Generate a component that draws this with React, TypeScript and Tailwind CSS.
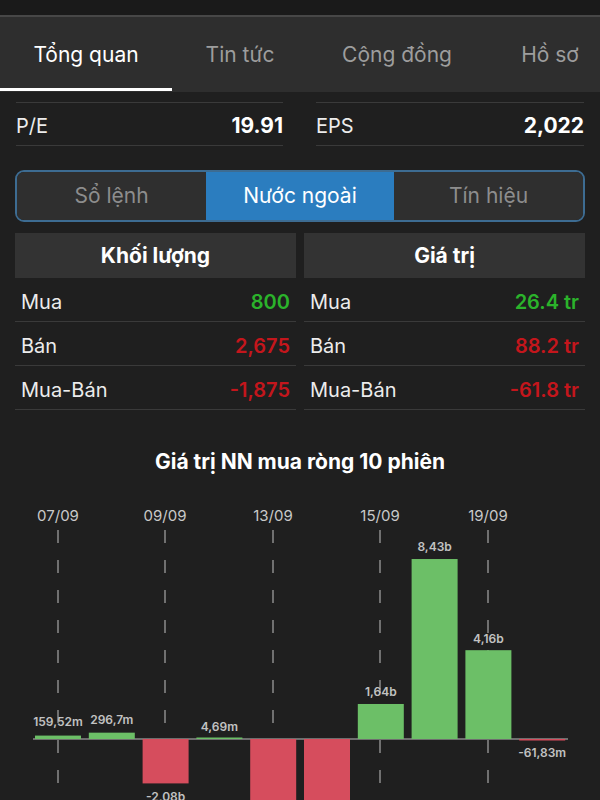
import React from "react";

const tabs = [
  { label: "Tổng quan", w: "w-[172px]", active: true },
  { label: "Tin tức", w: "w-[136px]", active: false },
  { label: "Cộng đồng", w: "w-[178px]", active: false },
  { label: "Hồ sơ", w: "w-[128px]", active: false },
];

const segments = [
  { label: "Sổ lệnh", w: "w-[189px]", active: false },
  { label: "Nước ngoài", w: "w-[188px]", active: true },
  { label: "Tín hiệu", w: "flex-1", active: false },
];

type Row = { label: string; value: string; up: boolean };

const volumeRows: Row[] = [
  { label: "Mua", value: "800", up: true },
  { label: "Bán", value: "2,675", up: false },
  { label: "Mua-Bán", value: "-1,875", up: false },
];

const valueRows: Row[] = [
  { label: "Mua", value: "26.4 tr", up: true },
  { label: "Bán", value: "88.2 tr", up: false },
  { label: "Mua-Bán", value: "-61.8 tr", up: false },
];

// values in billions, net foreign buy for 10 sessions
const bars = [
  { v: 0.16, label: "159,52m", ly: 722 },
  { v: 0.2967, label: "296,7m", ly: 720 },
  { v: -2.08, label: "-2,08b", ly: 797 },
  { v: 0.0047, label: "4,69m", ly: 727 },
  { v: -3.6, label: "", ly: 0 },
  { v: -3.9, label: "", ly: 0 },
  { v: 1.64, label: "1,64b", ly: 692 },
  { v: 8.43, label: "8,43b", ly: 547 },
  { v: 4.16, label: "4,16b", ly: 639 },
  { v: -0.0618, label: "-61,83m", ly: 753 },
];

const dates = [
  { x: 58, d: "07/09" },
  { x: 165, d: "09/09" },
  { x: 273, d: "13/09" },
  { x: 380, d: "15/09" },
  { x: 488, d: "19/09" },
];

const TOP = 474; // svg top in page coords
const BASE = 739 - TOP;
const SCALE = 21.35;

const StatTable = ({ title, rows }: { title: string; rows: Row[] }) => (
  <div className="flex flex-col">
    <div className="h-[45px] bg-[#333333] flex items-center justify-center text-[21px] font-bold text-white">
      {title}
    </div>
    {rows.map((r) => (
      <div
        key={r.label}
        className="h-[44px] border-b border-[#3a3a3a] flex items-center justify-between px-[6px] pt-[5px]"
      >
        <span className="text-[20px] text-[#ececec]">{r.label}</span>
        <span
          className={
            r.up
              ? "text-[20px] font-semibold text-[#2bb32b]"
              : "text-[20px] font-semibold text-[#c4161c]"
          }
        >
          {r.value}
        </span>
      </div>
    ))}
  </div>
);

const Chart = () => (
  <svg width="600" height={800 - TOP} className="block">
    {dates.map((d) => (
      <g key={d.d}>
        <text
          x={d.x}
          y={47}
          textAnchor="middle"
          fontSize="15"
          fill="#c9c9c9"
          fontFamily="Inter, sans-serif"
        >
          {d.d}
        </text>
        <line
          x1={d.x}
          x2={d.x}
          y1={56}
          y2={330}
          stroke="#707070"
          strokeWidth="2"
          strokeDasharray="13 17"
        />
      </g>
    ))}
    <line x1="33" x2="568" y1={BASE} y2={BASE} stroke="#8a8a8a" strokeWidth="1.5" />
    {bars.map((b, i) => {
      const x = 35 + i * 53.8;
      const h = Math.max(Math.abs(b.v) * SCALE, 1.5);
      const y = b.v >= 0 ? BASE - h : BASE;
      return (
        <g key={i}>
          <rect x={x} y={y} width="46" height={h} fill={b.v >= 0 ? "#6cbf67" : "#d64d5d"} />
          {b.label && (
            <text
              x={x + 23}
              y={b.ly - TOP + 4}
              textAnchor="middle"
              fontSize="12"
              fontWeight="600"
              fill="#c2c2c2"
              fontFamily="Inter, sans-serif"
            >
              {b.label}
            </text>
          )}
        </g>
      );
    })}
  </svg>
);

export default function App() {
  return (
    <div className="w-[600px] h-[800px] overflow-hidden bg-[#1f1f1f] font-['Inter',sans-serif]">
      <div className="h-[15px] bg-[#1a1a1a]" />
      <div className="h-[2px] bg-[#474747]" />

      {/* Tabs */}
      <div className="h-[75px] bg-[#2e2e2e] flex overflow-hidden">
        {tabs.map((t) => (
          <div key={t.label} className={`${t.w} shrink-0 relative flex items-center justify-center`}>
            <span className={t.active ? "text-[21px] text-white" : "text-[21px] text-[#9d9d9d]"}>
              {t.label}
            </span>
            {t.active && <div className="absolute left-0 right-0 bottom-[1px] h-[3px] bg-white" />}
          </div>
        ))}
      </div>

      {/* P/E, EPS */}
      <div className="mt-[10px] px-[16px] grid grid-cols-[267px_268px] gap-x-[33px]">
        <div className="h-[44px] border-y border-[#3a3a3a] flex items-center justify-between pt-[3px]">
          <span className="text-[20px] text-[#ececec]">P/E</span>
          <span className="text-[21px] font-bold text-white">19.91</span>
        </div>
        <div className="h-[44px] border-y border-[#3a3a3a] flex items-center justify-between pt-[3px]">
          <span className="text-[20px] text-[#ececec]">EPS</span>
          <span className="text-[21px] font-bold text-white">2,022</span>
        </div>
      </div>

      {/* Segmented control */}
      <div className="mt-[24px] mx-[15px] h-[52px] rounded-[9px] border-2 border-[#3d6c92] overflow-hidden flex">
        {segments.map((s) => (
          <div
            key={s.label}
            className={`${s.w} flex items-center justify-center ${
              s.active ? "bg-[#2b7dbf] text-white" : "bg-[#2f2f2f] text-[#8d8d8d]"
            }`}
          >
            <span className="text-[21px]">{s.label}</span>
          </div>
        ))}
      </div>

      {/* Foreign stats */}
      <div className="mt-[11px] mx-[15px] grid grid-cols-2 gap-x-[8px]">
        <StatTable title="Khối lượng" rows={volumeRows} />
        <StatTable title="Giá trị" rows={valueRows} />
      </div>

      <h3 className="mt-[40px] h-[24px] leading-[24px] text-center text-[21px] font-bold text-white">
        Giá trị NN mua ròng 10 phiên
      </h3>

      <Chart />
    </div>
  );
}
